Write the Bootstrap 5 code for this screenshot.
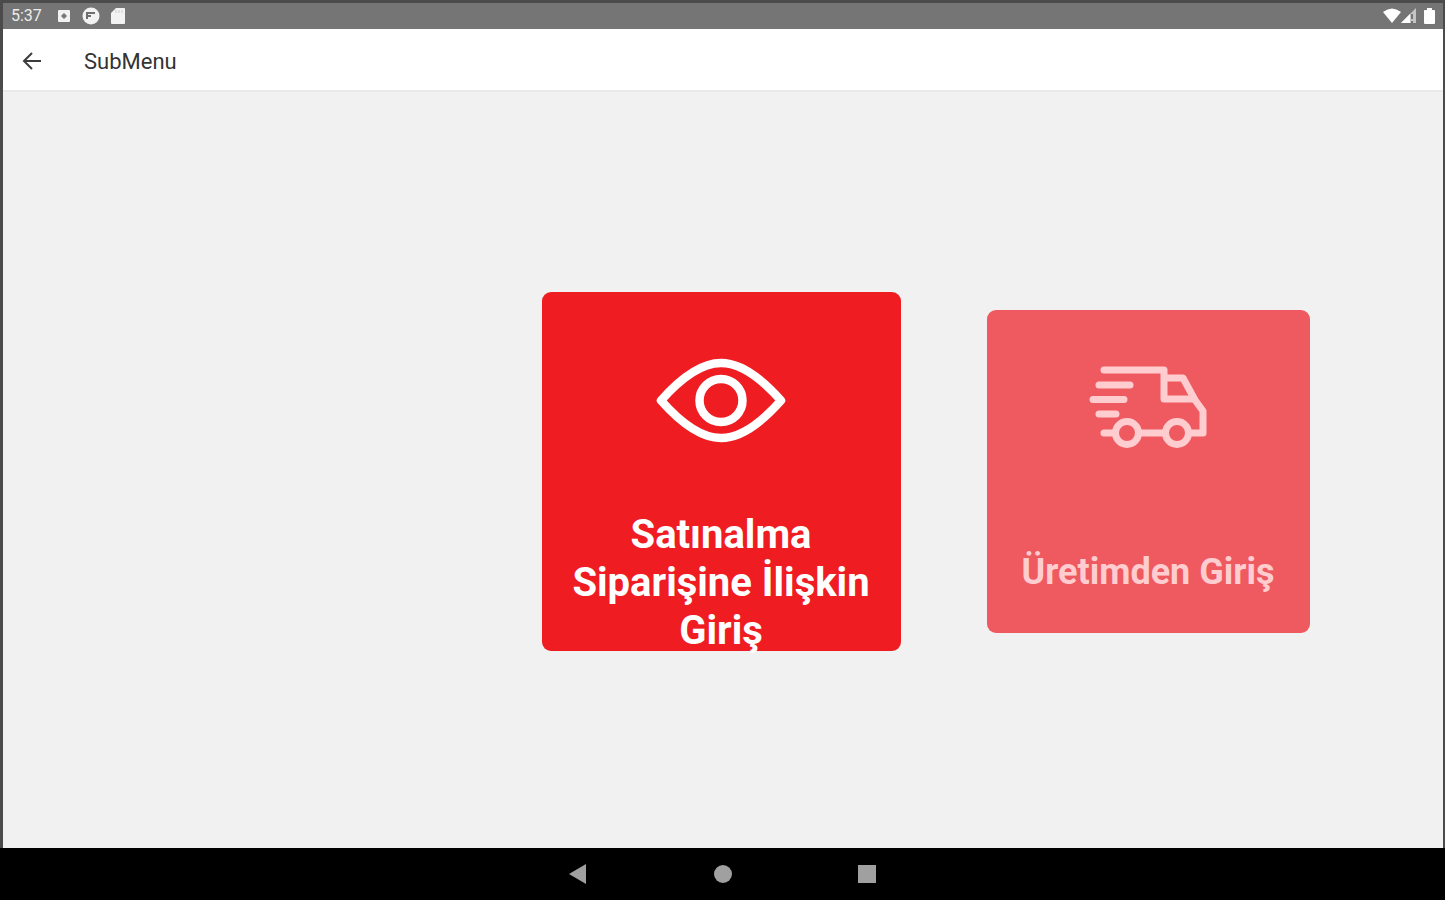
<!DOCTYPE html>
<html lang="tr">
<head>
<meta charset="utf-8">
<meta name="viewport" content="width=device-width, initial-scale=1">
<title>SubMenu</title>
<link href="https://cdn.jsdelivr.net/npm/bootstrap@5.3.0/dist/css/bootstrap.min.css" rel="stylesheet">
<style>
  body { font-family: Roboto, "Noto Sans", sans-serif; background: #000; }
  .device { border: solid #4b4b4b; border-width: 3px 2px 0 3px; }
  .status-bar { height: 26px; background: #757575; color: #ececec; font-size: 16px; line-height: 26px; padding: 0 8px; }
  .app-bar { height: 63px; background: #fff; color: #333; border-bottom: 2px solid #e9e9e9; padding: 4px 17px 0; gap: 40px; }
  .app-title { font-size: 22px; line-height: 28px; font-weight: 400; }
  .back-btn { width: 24px; height: 24px; }
  .stage { background: #f1f1f1; display: grid; grid-template-columns: 1fr auto 1fr; column-gap: 86px; align-items: center; padding: 2px 4px 0 0; }
  .tile { grid-column: 2; width: 359px; height: 359px; border-radius: 9px; background: #ef1c22; color: #fff; font-size: 40px; line-height: 48px; font-weight: 700; }
  .tile-next { grid-column: 3; width: 323px; height: 323px; background: #ef5a60; color: #ffcdd0; font-size: 36px; line-height: 43px; }
  .tile-icon { flex: 0 0 60%; padding-top: 2px; }
  .tile-label { flex: 0 0 40%; padding: 4px 16px 0; }
  .tile-next .tile-label { padding-top: 9px; }
  .nav-bar { height: 52px; background: #000; }
  .nav-keys { width: 30%; }
</style>
</head>
<body>
<div class="d-flex flex-column min-vh-100">
  <div class="device d-flex flex-column flex-grow-1">
    <div class="status-bar d-flex align-items-center">
      <span>5:37</span>
      <svg class="ms-3" width="12" height="14" viewBox="0 0 12 14" aria-hidden="true"><rect y="1" width="12" height="12" rx="1" fill="#f2f2f2"/><path d="M6 4L9 7L6 10L3 7Z" fill="#777"/></svg>
      <svg class="me-2" width="30" height="18" viewBox="0 0 30 18" aria-hidden="true"><circle cx="21" cy="9" r="8.500" fill="#f2f2f2"/><path d="M17 12V6H25M17 9H21" fill="none" stroke="#6e6e6e" stroke-width="2"/></svg>
      <svg width="18" height="16" viewBox="-2 0 18 16" aria-hidden="true"><path d="M6 0H14Q15 0 15 1V15Q15 16 14 16H2Q1 16 1 15V5Z" fill="#f2f2f2"/><path d="M6 2V5M9 2V5M12 2V5" stroke="#ccc"/></svg>
      <svg class="ms-auto" width="18" height="16" viewBox="0 0 18 16" aria-hidden="true"><path d="M0 4Q9 -3 18 4L9 15Z" fill="#fff"/></svg>
      <svg width="15" height="16" viewBox="0 0 15 16" aria-hidden="true"><path d="M0 15L15 0V15Z" fill="#c4c4c4"/><path d="M0 15L9 6V15Z" fill="#fff"/><path d="M11 6V11M11 13V15" stroke="#777" stroke-width="2"/></svg>
      <svg class="ms-2" width="11" height="16" viewBox="0 0 11 16" aria-hidden="true"><path d="M3 0H8V2H10Q11 2 11 3V15Q11 16 10 16H1Q0 16 0 15V3Q0 2 1 2H3Z" fill="#fff"/></svg>
    </div>

    <header class="app-bar d-flex align-items-center">
      <button type="button" class="back-btn btn p-0 border-0 d-flex align-items-center justify-content-center" aria-label="Geri">
        <svg width="24" height="24" viewBox="0 0 24 24" fill="none" stroke="#3c3c3c" stroke-width="2"><path d="M21 11H5M12 3L4 11L12 19"/></svg>
      </button>
      <h1 class="app-title mb-0">SubMenu</h1>
    </header>

    <main class="stage flex-grow-1">
      <button type="button" class="tile border-0 p-0 d-flex flex-column">
        <span class="tile-icon w-100 d-flex align-items-center justify-content-center">
          <svg width="132" height="86" viewBox="0 0 132 86" fill="none" stroke="currentColor" stroke-width="8.500" aria-hidden="true"><path d="M6 43.500C25 22 45 6 66 6C87 6 107 22 126 43.500C107 65 87 81 66 81C45 81 25 65 6 43.500Z" stroke-linejoin="round"/><circle cx="66" cy="43.500" r="21.500"/></svg>
        </span>
        <span class="tile-label w-100 d-flex align-items-center justify-content-center">Satınalma Siparişine İlişkin Giriş</span>
      </button>
      <button type="button" class="tile tile-next border-0 p-0 d-flex flex-column">
        <span class="tile-icon w-100 d-flex align-items-center justify-content-center">
          <svg width="118" height="82" viewBox="0 0 118 82" fill="none" stroke="currentColor" stroke-width="7" stroke-linecap="round" stroke-linejoin="round" aria-hidden="true"><path d="M15 4H75V33H104M75 12H94L106 34L114 45V67H100M76 67H50M26 67H15M10 19H41M4 33.500H35M10 48H27"/><circle cx="38" cy="67" r="11.500"/><circle cx="88" cy="67" r="11.500"/></svg>
        </span>
        <span class="tile-label w-100 d-flex align-items-center justify-content-center">Üretimden Giriş</span>
      </button>
    </main>
  </div>

  <nav class="nav-bar d-flex justify-content-center" aria-label="Sistem">
    <div class="nav-keys d-flex justify-content-around align-items-center">
      <button type="button" class="btn p-0 border-0 d-flex" aria-label="Geri"><svg width="20" height="20" viewBox="0 0 20 20" fill="#a0a0a0"><path d="M1 10L18 0V20Z"/></svg></button>
      <button type="button" class="btn p-0 border-0 d-flex" aria-label="Ana ekran"><svg width="20" height="20" viewBox="0 0 20 20" fill="#a0a0a0"><circle cx="10" cy="10" r="9"/></svg></button>
      <button type="button" class="btn p-0 border-0 d-flex" aria-label="Son uygulamalar"><svg width="20" height="20" viewBox="0 0 20 20" fill="#a0a0a0"><rect x="1" y="1" width="18" height="18"/></svg></button>
    </div>
  </nav>
</div>
<script src="https://cdn.jsdelivr.net/npm/bootstrap@5.3.0/dist/js/bootstrap.bundle.min.js"></script>
</body>
</html>
